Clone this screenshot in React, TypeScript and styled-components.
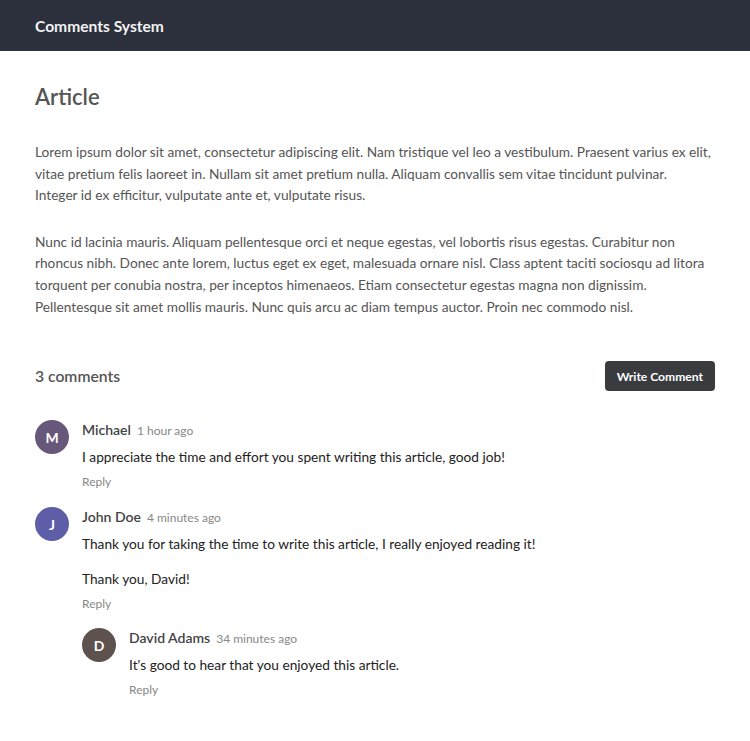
import React from 'react';
import styled, { createGlobalStyle } from 'styled-components';

const GlobalStyle = createGlobalStyle`
    * {
        box-sizing: border-box;
    }
    body {
        margin: 0;
        background: #fff;
        font-family: 'Segoe UI', Lato, 'Open Sans', sans-serif;
        color: #555;
    }
`;

type CommentData = {
    id: number;
    author: string;
    time: string;
    color: string;
    paragraphs: string[];
    replies?: CommentData[];
};

const comments: CommentData[] = [
    {
        id: 1,
        author: 'Michael',
        time: '1 hour ago',
        color: '#67577a',
        paragraphs: ['I appreciate the time and effort you spent writing this article, good job!'],
    },
    {
        id: 2,
        author: 'John Doe',
        time: '4 minutes ago',
        color: '#5d5da8',
        paragraphs: [
            'Thank you for taking the time to write this article, I really enjoyed reading it!',
            'Thank you, David!',
        ],
        replies: [
            {
                id: 3,
                author: 'David Adams',
                time: '34 minutes ago',
                color: '#5e524e',
                paragraphs: ["It's good to hear that you enjoyed this article."],
            },
        ],
    },
];

const Comment: React.FC<{ comment: CommentData }> = ({ comment }) => (
    <CommentRow>
        <Avatar $color={comment.color}>{comment.author.charAt(0)}</Avatar>
        <CommentBody>
            <CommentMeta>
                <AuthorName>{comment.author}</AuthorName>
                <CommentTime>{comment.time}</CommentTime>
            </CommentMeta>
            <CommentText>
                {comment.paragraphs.map((p) => (
                    <p key={p}>{p}</p>
                ))}
            </CommentText>
            <ReplyLink>Reply</ReplyLink>
            {comment.replies && (
                <Replies>
                    {comment.replies.map((r) => (
                        <Comment key={r.id} comment={r} />
                    ))}
                </Replies>
            )}
        </CommentBody>
    </CommentRow>
);

const App: React.FC = () => (
    <>
        <GlobalStyle />
        <Header>
            <HeaderTitle>Comments System</HeaderTitle>
        </Header>
        <Main>
            <ArticleTitle>Article</ArticleTitle>
            <ArticleText>
                Lorem ipsum dolor sit amet, consectetur adipiscing elit. Nam tristique vel leo a vestibulum.
                Praesent varius ex elit, vitae pretium felis laoreet in. Nullam sit amet pretium nulla. Aliquam
                convallis sem vitae tincidunt pulvinar. Integer id ex efficitur, vulputate ante et, vulputate risus.
            </ArticleText>
            <ArticleText>
                Nunc id lacinia mauris. Aliquam pellentesque orci et neque egestas, vel lobortis risus egestas.
                Curabitur non rhoncus nibh. Donec ante lorem, luctus eget ex eget, malesuada ornare nisl. Class
                aptent taciti sociosqu ad litora torquent per conubia nostra, per inceptos himenaeos. Etiam
                consectetur egestas magna non dignissim. Pellentesque sit amet mollis mauris. Nunc quis arcu ac
                diam tempus auctor. Proin nec commodo nisl.
            </ArticleText>
            <CommentsHeader>
                <CommentsCount>3 comments</CommentsCount>
                <WriteButton>Write Comment</WriteButton>
            </CommentsHeader>
            <CommentList>
                {comments.map((c) => (
                    <Comment key={c.id} comment={c} />
                ))}
            </CommentList>
        </Main>
    </>
);

const Header = styled.header`
    display: flex;
    align-items: center;
    height: 51px;
    padding: 0 35px;
    background-color: #2b303c;
`;

const HeaderTitle = styled.h1`
    margin: 0;
    font-size: 15.6px;
    font-weight: 700;
    color: #f2f2f2;
`;

const Main = styled.main`
    padding: 33px 35px 40px;
`;

const ArticleTitle = styled.h2`
    margin: 0 0 31px;
    font-size: 22px;
    line-height: 26px;
    font-weight: 600;
    color: #555;
`;

const ArticleText = styled.p`
    max-width: 676.5px;
    margin: 0 0 25px;
    font-size: 13.7px;
    line-height: 21.6px;
    color: #555;
`;

const CommentsHeader = styled.div`
    display: flex;
    align-items: center;
    justify-content: space-between;
    margin-top: 44px;
`;

const CommentsCount = styled.h3`
    margin: 0;
    font-size: 15.7px;
    font-weight: 600;
    color: #555;
`;

const WriteButton = styled.button`
    height: 30px;
    padding: 0 12px;
    border: none;
    border-radius: 4px;
    background-color: #3a3b3f;
    color: #fff;
    font-family: inherit;
    font-size: 12.1px;
    font-weight: 700;
    cursor: pointer;
    &:hover {
        opacity: 0.9;
    }
`;

const CommentList = styled.div`
    display: flex;
    flex-direction: column;
    gap: 16px;
    margin-top: 29px;
`;

const CommentRow = styled.div`
    display: flex;
    gap: 13px;
`;

const Avatar = styled.div<{ $color: string }>`
    display: flex;
    align-items: center;
    justify-content: center;
    flex-shrink: 0;
    width: 34px;
    height: 34px;
    border-radius: 50%;
    background-color: ${({ $color }) => $color};
    color: #fff;
    font-size: 14px;
    font-weight: 700;
`;

const CommentBody = styled.div`
    flex: 1;
    min-width: 0;
`;

const CommentMeta = styled.div`
    display: flex;
    align-items: baseline;
    gap: 6px;
    line-height: 20px;
`;

const AuthorName = styled.span`
    font-size: 14px;
    font-weight: 600;
    color: #444;
`;

const CommentTime = styled.span`
    font-size: 12px;
    color: #888;
`;

const CommentText = styled.div`
    margin-top: 5px;
    font-size: 13.7px;
    line-height: 21px;
    color: #222;
    p {
        margin: 0 0 14px;
    }
    p:last-child {
        margin-bottom: 0;
    }
`;

const ReplyLink = styled.button`
    display: block;
    margin-top: 6px;
    padding: 0;
    border: none;
    background: none;
    font-family: inherit;
    font-size: 12px;
    line-height: 18px;
    color: #888;
    cursor: pointer;
`;

const Replies = styled.div`
    display: flex;
    flex-direction: column;
    gap: 16px;
    margin-top: 15px;
`;

export default App;
